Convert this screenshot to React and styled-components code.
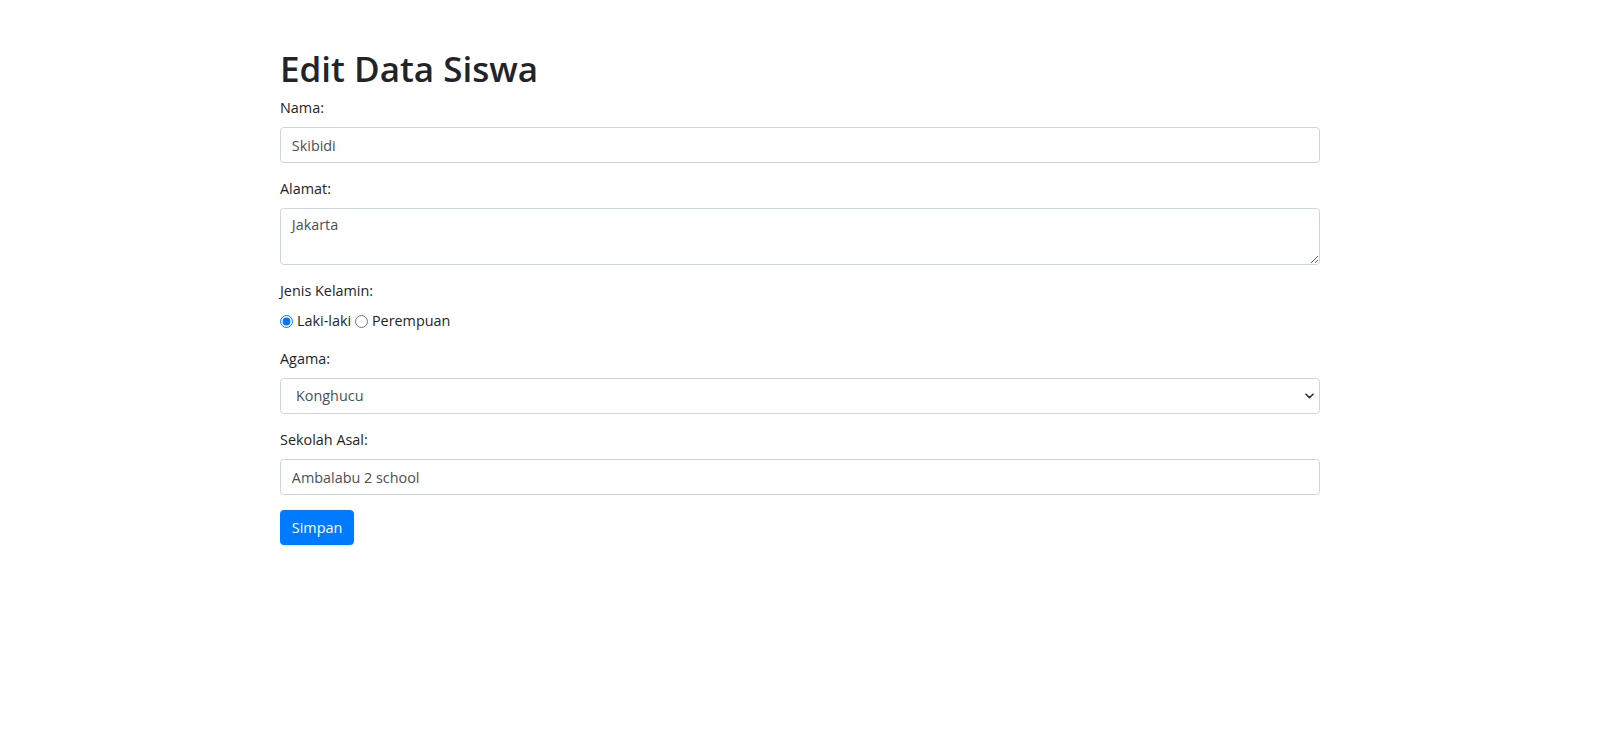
import React from 'react';
import styled, { createGlobalStyle } from 'styled-components';

const GlobalStyle = createGlobalStyle`
  body {
    margin: 0;
    background: #fff;
    color: #212529;
    font-family: "Open Sans", "Noto Sans", sans-serif;
    font-size: 14.4px;
    line-height: 1.5;
  }
  *, *::before, *::after {
    box-sizing: border-box;
  }
`;

const Page = styled.main`
  width: 1040px;
  margin: 0 auto;
  padding-top: 48px;
`;

const Title = styled.h1`
  margin: 0 0 7px;
  font-size: 35px;
  font-weight: 600;
  line-height: 1.2;
`;

const Group = styled.div`
  margin-bottom: 15px;
`;

const Label = styled.label`
  display: block;
  margin-bottom: 8.4px;
`;

const controlStyle = `
  display: block;
  width: 100%;
  padding: 5.4px 10.8px;
  font-family: inherit;
  font-size: 14.4px;
  line-height: 1.5;
  color: #495057;
  background: #fff;
  border: 1px solid #ced4da;
  border-radius: 3.6px;
  outline: none;
`;

const Input = styled.input`
  ${controlStyle}
  height: 36px;
`;

const TextArea = styled.textarea`
  ${controlStyle}
  height: 57px;
  resize: vertical;
`;

const SelectWrap = styled.div`
  position: relative;
`;

const Select = styled.select`
  ${controlStyle}
  height: 36px;
  padding-left: 15px;
  appearance: none;
`;

const Chevron = styled.svg`
  position: absolute;
  right: 6px;
  top: 50%;
  width: 9px;
  height: 6px;
  margin-top: -3px;
  pointer-events: none;
`;

const RadioRow = styled.div`
  height: 23px;
  margin: 1px 0 15px;
`;

const RadioLabel = styled.label`
  display: inline;
`;

const Radio = styled.input`
  width: 13px;
  height: 13px;
  margin: 0 4px 0 0;
  vertical-align: -2px;
`;

const Button = styled.button`
  height: 35px;
  padding: 0 10.8px;
  font-family: inherit;
  font-size: 14.4px;
  line-height: 1.5;
  color: #fff;
  background: #007bff;
  border: 1px solid #007bff;
  border-radius: 3.6px;
  cursor: pointer;
`;

const agamaList = ['Islam', 'Kristen', 'Katolik', 'Hindu', 'Buddha', 'Konghucu'];

export default function App() {
  return (
    <>
      <GlobalStyle />
      <Page>
        <Title>Edit Data Siswa</Title>
        <form onSubmit={(e) => e.preventDefault()}>
          <Group>
            <Label htmlFor="nama">Nama:</Label>
            <Input id="nama" type="text" defaultValue="Skibidi" />
          </Group>
          <Group>
            <Label htmlFor="alamat">Alamat:</Label>
            <TextArea id="alamat" rows={2} defaultValue="Jakarta" />
          </Group>
          <Label>Jenis Kelamin:</Label>
          <RadioRow>
            <RadioLabel>
              <Radio type="radio" name="jk" value="L" defaultChecked />
              Laki-laki
            </RadioLabel>
            {' '}
            <RadioLabel>
              <Radio type="radio" name="jk" value="P" />
              Perempuan
            </RadioLabel>
          </RadioRow>
          <Group>
            <Label htmlFor="agama">Agama:</Label>
            <SelectWrap>
              <Select id="agama" defaultValue="Konghucu">
                {agamaList.map((a) => (
                  <option key={a} value={a}>{a}</option>
                ))}
              </Select>
              <Chevron viewBox="0 0 9 6">
                <path d="M1 1.2 L4.5 4.6 L8 1.2" fill="none" stroke="#333" strokeWidth="1.6" strokeLinecap="round" strokeLinejoin="round" />
              </Chevron>
            </SelectWrap>
          </Group>
          <Group>
            <Label htmlFor="sekolah">Sekolah Asal:</Label>
            <Input id="sekolah" type="text" defaultValue="Ambalabu 2 school" />
          </Group>
          <Button type="submit">Simpan</Button>
        </form>
      </Page>
    </>
  );
}
